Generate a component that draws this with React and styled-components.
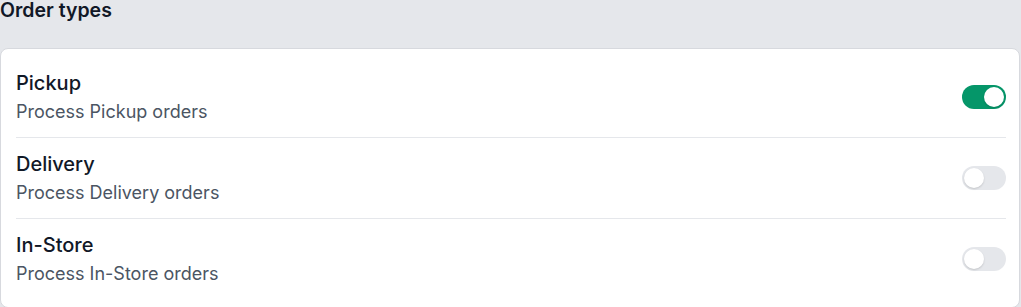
import React, { useState } from "react";
import styled, { createGlobalStyle } from "styled-components";

const Global = createGlobalStyle`
  html, body { margin: 0; padding: 0; background: #e5e7eb; }
  body { font-family: Inter, "Noto Sans", sans-serif; -webkit-font-smoothing: antialiased; }
  * { box-sizing: border-box; }
`;

const Page = styled.div`
  width: 1020px;
  display: flex;
  flex-direction: column;
`;

const Header = styled.div`
  height: 48px;
  display: flex;
  align-items: flex-start;
`;

const Title = styled.h2`
  margin: -2px 0 0 0;
  font-size: 19.5px;
  line-height: 24px;
  font-weight: 600;
  color: #111827;
`;

const Card = styled.div`
  background: #ffffff;
  border: 1px solid #d7d9de;
  border-radius: 8px;
  padding: 8px 13px 8px 15px;
  display: flex;
  flex-direction: column;
`;

const Row = styled.div`
  display: flex;
  align-items: center;
  justify-content: space-between;
  padding: 12px 0 13px;
  border-top: ${(p) => (p.$first ? "none" : "1px solid #e5e7eb")};
`;

const Info = styled.div`
  display: flex;
  flex-direction: column;
  gap: 3px;
`;

const Name = styled.div`
  font-size: 20px;
  line-height: 28px;
  font-weight: 500;
  color: #111827;
`;

const Desc = styled.div`
  font-size: 18px;
  line-height: 24px;
  font-weight: 400;
  color: #4b5563;
`;

const Switch = styled.button`
  position: relative;
  width: 44px;
  height: 24px;
  border-radius: 999px;
  border: none;
  padding: 0;
  cursor: pointer;
  background: ${(p) => (p.$on ? "#059669" : "#e5e7eb")};
  flex-shrink: 0;
`;

const Knob = styled.span`
  position: absolute;
  top: 2px;
  left: ${(p) => (p.$on ? "22px" : "2px")};
  width: 20px;
  height: 20px;
  border-radius: 50%;
  background: #ffffff;
  box-shadow: 0 1px 2px rgba(0, 0, 0, 0.15);
`;

const items = [
  { name: "Pickup", on: true },
  { name: "Delivery", on: false },
  { name: "In-Store", on: false },
];

export default function App() {
  const [state, setState] = useState(items.map((i) => i.on));
  return (
    <Page>
      <Global />
      <Header>
        <Title>Order types</Title>
      </Header>
      <Card>
        {items.map((it, i) => (
          <Row key={it.name} $first={i === 0}>
            <Info>
              <Name>{it.name}</Name>
              <Desc>Process {it.name} orders</Desc>
            </Info>
            <Switch
              $on={state[i]}
              onClick={() => setState((s) => s.map((v, j) => (j === i ? !v : v)))}
            >
              <Knob $on={state[i]} />
            </Switch>
          </Row>
        ))}
      </Card>
    </Page>
  );
}
